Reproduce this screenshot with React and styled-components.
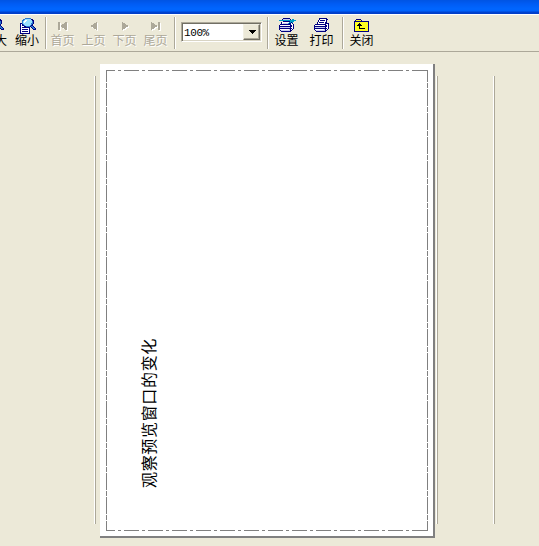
import React from 'react';
import styled, { createGlobalStyle } from 'styled-components';

const Global = createGlobalStyle`
  * { box-sizing: border-box; }
  body { margin: 0; background: #ece9d8; overflow: hidden; }
`;

const Window = styled.div`
  width: 539px;
  height: 546px;
  display: flex;
  flex-direction: column;
  overflow: hidden;
  background: #ece9d8;
  font-family: "Liberation Sans", "Noto Sans CJK SC", sans-serif;
`;

const TitleBar = styled.div`
  height: 15px;
  flex: none;
  background: linear-gradient(#0054e3 0, #005cf4 4px, #0066ff 9px, #0062fb 11px, #0043d0 12px, #003dc8 14px, #fff 14px);
`;

const Toolbar = styled.div`
  height: 37px;
  flex: none;
  display: flex;
  align-items: flex-start;
  border-bottom: 1px solid #aca899;
`;

const ToolButton = styled.button`
  width: ${(p) => p.$width}px;
  height: 34px;
  margin: 0 0 0 ${(p) => p.$gap || 0}px;
  padding: 3px 0 0;
  border: 0;
  flex: none;
  background: none;
  display: flex;
  flex-direction: column;
  align-items: center;
  font: 12px/12px "Noto Sans CJK SC", sans-serif;
  white-space: nowrap;
  color: ${(p) => (p.$dim ? '#aca899' : '#000')};
  text-shadow: ${(p) => (p.$dim ? '1px 1px #fff' : 'none')};
`;

const Label = styled.span`
  height: 12px;
`;

const Divider = styled.div`
  width: 2px;
  height: 32px;
  margin: 2px 0 0 ${(p) => p.$gap}px;
  flex: none;
  background: linear-gradient(90deg, #aca899 50%, #fff 50%);
`;

const Zoom = styled.div`
  width: 81px;
  height: 20px;
  margin: 7px 0 0 5px;
  flex: none;
  display: flex;
  border: 1px solid;
  border-color: #aca899 #fff #fff #aca899;
  box-shadow: inset 1px 1px #716f64, inset -1px -1px #d8d4c4;
  background: #fff;
  padding: 1px;
`;

const ZoomValue = styled.span`
  flex: 1;
  padding: 2px 0 0 1px;
  font: 11px/15px "Liberation Mono", monospace;
  letter-spacing: -0.4px;
`;

const DropButton = styled.span`
  width: 17px;
  display: flex;
  align-items: center;
  justify-content: center;
  background: #ece9d8;
  border: 1px solid;
  border-color: #f1efe2 #716f64 #716f64 #f1efe2;
  box-shadow: inset -1px -1px #aca899;
`;

const Icon = styled.svg`
  display: block;
  flex: none;
  shape-rendering: crispEdges;
`;

const Preview = styled.main`
  flex: 1;
  display: flex;
  align-items: flex-start;
  padding: 12px 0 0 94px;
`;

const Rule = styled.div`
  width: 2px;
  height: 448px;
  margin: 12px 0 0 ${(p) => p.$gap || 0}px;
  flex: none;
  background: linear-gradient(90deg, #fff 50%, #aca899 50%);
`;

const Paper = styled.section`
  width: 335px;
  height: 474px;
  margin-left: 4px;
  flex: none;
  background: #fff;
  border-right: 2px solid #808080;
  border-bottom: 2px solid #808080;
  display: grid;
`;

const MarginGuide = styled.svg`
  grid-area: 1 / 1;
  shape-rendering: crispEdges;
  stroke: #808080;
`;

const VerticalText = styled.div`
  grid-area: 1 / 1;
  align-self: end;
  width: 20px;
  height: 152px;
  margin: 0 0 48px 38px;
  writing-mode: vertical-rl;
  transform: rotate(180deg);
  text-orientation: sideways;
  font: 400 16px/20px "Noto Sans CJK SC", sans-serif;
  letter-spacing: 0.67px;
  white-space: nowrap;
  color: #000;
`;

const palette = { b: '#000080', k: '#000', w: '#fff', c: '#00a0c8', l: '#98e0ff', v: '#c8ccf0', y: '#ffff20', g: '#aca899', h: '#2878d0' };

function Pixels({ rows }) {
  return (
    <Icon width="18" height="16" viewBox="0 0 18 16">
      {rows.flatMap((row, y) =>
        [...row].map((c, x) =>
          palette[c] ? <rect key={x + '-' + y} x={x} y={y} width="1" height="1" fill={palette[c]} /> : null
        )
      )}
    </Icon>
  );
}

const magnifier = [
  '.......hhhhhh.....',
  '.....hhllllllbb...',
  '....hhlwwlllllbb..',
  '....hlwwllllllhb..',
  '....hlwlllllllhb..',
  '..bbhllllllllhhb..',
  '..bwbhlllllllhb...',
  '..bwbbhlllllhbb...',
  '..bwwwbbhhhhbhhb..',
  '..bwbbbbbbbb.bhhb.',
  '..bwwwwwwwwb..bhhb',
  '..bwbbbbbbwb...bbb',
  '..bwwwwwwwwb......',
  '..bwbbbbbbwb......',
  '..bwwwwwwwwb......',
  '..bbbbbbbbbb......',
];
const settings = [
  '.....bbbbbbb......',
  '....bvvvvvvvb.cc..',
  '.ccccccccccccccccc',
  '.....bbbbbbbcccc..',
  '...bwwwwwwwccbc...',
  '...bwvvvvvcbbwb...',
  '..bbbbbbbbbbbwwb..',
  '.bwwwwwwwwwwbbwb..',
  '.bbbbbbbbbbbbbwb..',
  '.bvvvvvvvvvvbwwb..',
  '.bbbbbbbbbbbbbwb..',
  '.bwwwwwwwwwvbwb...',
  '..bvvvvvvvvvbb....',
  '...bbbbbbbbbb.....',
];
const printer = [
  '......bbbbbbbb....',
  '......bwwwwwwbb...',
  '.....bwbbbbbwb....',
  '.....bwwwwwwwb....',
  '....bwbbbbbwbb....',
  '....bwwwwwwwbbbb..',
  '..bbbbbbbbbbbwwb..',
  '.bwwwwwwwwwwbbwb..',
  '.bbbbbbbbbbbbbwb..',
  '.bvvvvvvvvvvbwwb..',
  '.bbbbbbbbbbbbbwb..',
  '.bwwwwwwwwwvbwb...',
  '..bvvvvvvvvvbb....',
  '...bbbbbbbbbb.....',
];
const folder = [
  '..................',
  '...bbbbb..........',
  '..byyyyyb.........',
  '.bbbbbbbbbbbbbbb..',
  '.byyyyyyyyyyyyyb..',
  '.byyyykyyyyyyyyb..',
  '.byyykkkyyyyyyyb..',
  '.byykkkkkyyyyyyb..',
  '.byyyykyyyyyyyyb..',
  '.byyyykyyyyyyyyb..',
  '.byyyykkkkkkyyyb..',
  '.byyyyyyyyyyyyyb..',
  '.byyyyyyyyyyyyyb..',
  '.bbbbbbbbbbbbbbb..',
];

const arrows = {
  first: 'M3 4h2v8H3zM5 8l6-4v8zM11 4h1v8h-1z',
  prev: 'M4 8l7-4v8z',
  next: 'M5 4v8l7-4z',
  last: 'M3 4v8l7-4zM10 4h2v8h-2z',
};

function Arrow({ kind }) {
  return (
    <Icon width="16" height="16" viewBox="0 0 16 16">
      <path d={arrows[kind]} fill="#fff" transform="translate(1 1)" />
      <path d={arrows[kind]} fill="#aca899" />
    </Icon>
  );
}

function Tool({ label, children, ...rest }) {
  return (
    <ToolButton {...rest}>
      {children}
      <Label>{label}</Label>
    </ToolButton>
  );
}

export default function App() {
  return (
    <Window>
      <Global />
      <TitleBar />
      <Toolbar>
        <Tool label="放大" $width={30} $gap={-20}><Pixels rows={magnifier} /></Tool>
        <Tool label="缩小" $width={30} $gap={2}><Pixels rows={magnifier} /></Tool>
        <Divider $gap={3} />
        <Tool label="首页" $width={31} $dim><Arrow kind="first" /></Tool>
        <Tool label="上页" $width={31} $dim><Arrow kind="prev" /></Tool>
        <Tool label="下页" $width={31} $dim><Arrow kind="next" /></Tool>
        <Tool label="尾页" $width={31} $dim><Arrow kind="last" /></Tool>
        <Divider $gap={3} />
        <Zoom>
          <ZoomValue>100%</ZoomValue>
          <DropButton>
            <Icon width="8" height="4" viewBox="0 0 8 4"><path d="M0 0h8L4 4z" /></Icon>
          </DropButton>
        </Zoom>
        <Divider $gap={5} />
        <Tool label="设置" $width={35}><Pixels rows={settings} /></Tool>
        <Tool label="打印" $width={35}><Pixels rows={printer} /></Tool>
        <Divider $gap={3} />
        <Tool label="关闭" $width={35}><Pixels rows={folder} /></Tool>
      </Toolbar>
      <Preview>
        <Rule />
        <Paper>
          <MarginGuide width="333" height="472">
            <path d="M6 6.5H328M6 466.5H328" strokeDasharray="15 3 3 3" strokeDashoffset="6" />
            <path d="M6.5 6V467M327.5 6V467" strokeDasharray="17 1 5 1" strokeDashoffset="5" />
          </MarginGuide>
          <VerticalText>观察预览窗口的变化</VerticalText>
        </Paper>
        <Rule $gap={1} />
        <Rule $gap={55} />
      </Preview>
    </Window>
  );
}
